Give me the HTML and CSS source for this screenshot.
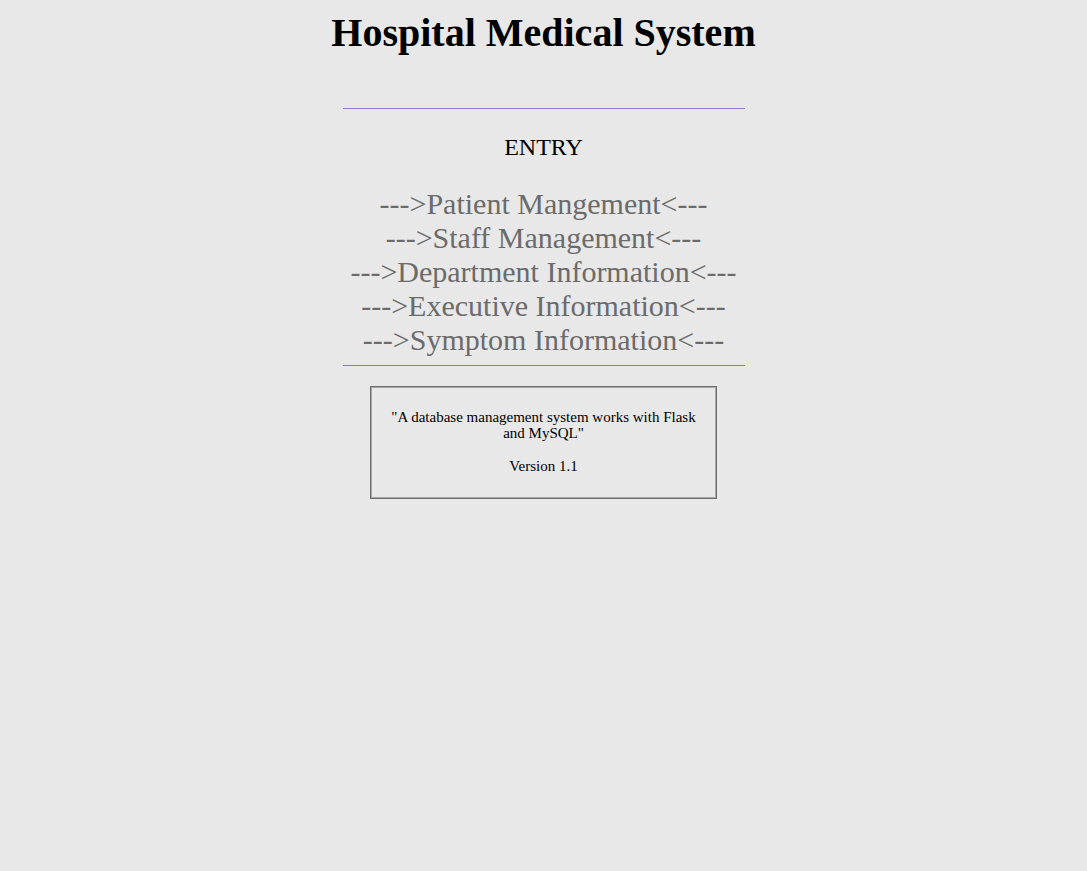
FILE: index.html
```html
<!DOCTYPE html>
<html>
<head>
<meta charset="utf-8">
<title>Hospital Medical System</title>
<link rel="stylesheet" href="styles.css">
</head>
<body>
<h1 class="title">Hospital Medical System</h1>
<div class="column">
  <hr class="rule rule-top">
  <div class="entry">ENTRY</div>
  <nav class="links">
    <a class="link" href="#">---&gt;Patient Mangement&lt;---</a>
    <a class="link" href="#">---&gt;Staff Management&lt;---</a>
    <a class="link" href="#">---&gt;Department Information&lt;---</a>
    <a class="link" href="#">---&gt;Executive Information&lt;---</a>
    <a class="link" href="#">---&gt;Symptom Information&lt;---</a>
  </nav>
  <hr class="rule rule-bottom">
  <div class="about">
    <p class="about-text">"A database management system works with Flask and MySQL"</p>
    <p class="about-text">Version 1.1</p>
  </div>
</div>
</body>
</html>
```
FILE: styles.css
```css
html, body {
  margin: 0;
  padding: 0;
  background: #e8e8e8;
}
body {
  font-family: "Liberation Serif", "Times New Roman", serif;
  color: #000;
}
.title {
  margin: 0;
  padding-top: 10px;
  text-align: center;
  font-size: 40px;
  font-weight: bold;
  line-height: 46px;
}
.column {
  width: 402px;
  margin: 0 auto;
  display: flex;
  flex-direction: column;
  align-items: center;
}
.rule {
  width: 100%;
  margin: 0;
  border: 0;
  height: 1px;
}
.rule-top {
  margin-top: 52px;
  background: #9a78d4;
}
.rule-bottom {
  background: #8a7fb0;
}
.entry {
  margin-top: 24px;
  font-size: 24px;
  line-height: 28px;
}
.links {
  margin-top: 26px;
  display: flex;
  flex-direction: column;
  align-items: center;
  margin-bottom: 8px;
}
.link {
  font-size: 30px;
  line-height: 34px;
  color: #6b6b6b;
  text-decoration: none;
}
.about {
  box-sizing: border-box;
  margin-top: 20px;
  width: 347px;
  padding: 22px 1px 24px;
  border: 1px solid #6e6e6e;
  box-shadow: inset 0 0 0 1px #a6a6a6;
  text-align: center;
}
.about-text {
  margin: 0 12px;
  font-size: 15px;
  line-height: 16px;
}
.about-text + .about-text {
  margin-top: 17px;
}
```
